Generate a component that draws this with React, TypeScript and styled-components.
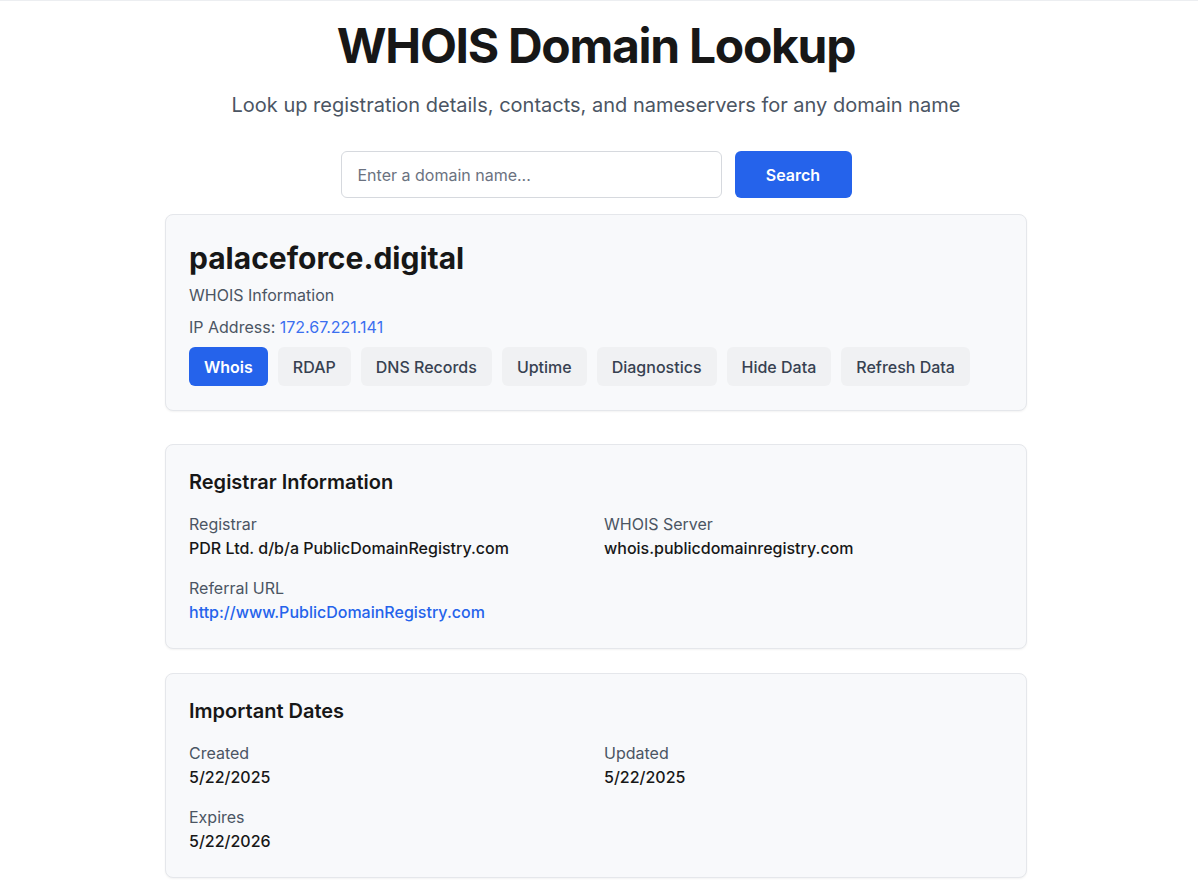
import React, { useState } from 'react'
import styled, { createGlobalStyle } from 'styled-components'

const GlobalStyle = createGlobalStyle`
  * {
    box-sizing: border-box;
  }

  body {
    margin: 0;
    padding-right: 6px;
    background: #ffffff;
    color: #111827;
    font-family: Inter, "Noto Sans", "Liberation Sans", sans-serif;
    border-top: 1px solid #eceef1;
  }
`

const Page = styled.div`
  max-width: 862px;
  margin: 0 auto;
  padding: 16px 0 24px;
`

const Header = styled.header`
  text-align: center;
`

const Title = styled.h1`
  margin: 0;
  font-size: 48px;
  line-height: 58px;
  font-weight: 700;
  letter-spacing: -1.3px;
  color: #171717;
`

const Subtitle = styled.p`
  margin: 16px 0 0;
  font-size: 20px;
  line-height: 28px;
  color: #4b5563;
`

const SearchForm = styled.form`
  display: flex;
  justify-content: center;
  gap: 13px;
  margin: 32px 0 16px;
`

const SearchInput = styled.input`
  width: 381px;
  height: 47px;
  padding: 0 16px;
  border: 1px solid #d6d9de;
  border-radius: 6px;
  font-family: inherit;
  font-size: 16px;
  color: #111827;
  outline: none;

  &::placeholder {
    color: #6b7280;
  }
`

const SearchButton = styled.button`
  width: 117px;
  height: 47px;
  border: none;
  border-radius: 6px;
  background: #2563eb;
  color: #ffffff;
  font-family: inherit;
  font-size: 16px;
  font-weight: 600;
  cursor: pointer;
`

const Card = styled.section<{ $spaceAfter: number }>`
  background: #f8f9fb;
  border: 1px solid #e5e7eb;
  border-radius: 8px;
  box-shadow: 0 1px 2px rgba(0, 0, 0, 0.05);
  padding: 23px 23px 24px;
  margin-bottom: ${(p) => p.$spaceAfter}px;
`

const DomainName = styled.h2`
  margin: 0;
  font-size: 30px;
  line-height: 40px;
  font-weight: 700;
  color: #171717;
`

const MetaLine = styled.p<{ $gap: number }>`
  margin: ${(p) => p.$gap}px 0 0;
  font-size: 16px;
  line-height: 24px;
  color: #4b5563;
`

const IpLink = styled.a`
  color: #3b6ff0;
  text-decoration: none;
`

const TabRow = styled.div`
  display: flex;
  flex-wrap: wrap;
  gap: 10px;
  margin-top: 8px;
`

const TabButton = styled.button<{ $active?: boolean }>`
  height: 39px;
  padding: 0 15px;
  border: none;
  border-radius: 6px;
  background: ${(p) => (p.$active ? '#2563eb' : '#f0f1f3')};
  color: ${(p) => (p.$active ? '#ffffff' : '#374151')};
  font-family: inherit;
  font-size: 16px;
  font-weight: ${(p) => (p.$active ? 600 : 500)};
  cursor: pointer;
`

const SectionTitle = styled.h3`
  margin: 0 0 16px;
  font-size: 20px;
  line-height: 28px;
  font-weight: 600;
  color: #171717;
`

const InfoGrid = styled.div`
  display: grid;
  grid-template-columns: 1fr 1fr;
  column-gap: 16px;
  row-gap: 16px;
`

const Field = styled.div`
  display: flex;
  flex-direction: column;
`

const FieldLabel = styled.span`
  font-size: 16px;
  line-height: 24px;
  color: #4b5563;
`

const FieldValue = styled.span`
  font-size: 16px;
  line-height: 24px;
  font-weight: 500;
  color: #171717;
`

const FieldLink = styled.a`
  font-size: 16px;
  line-height: 24px;
  font-weight: 500;
  color: #2563eb;
  text-decoration: none;
`

const tabs = ['Whois', 'RDAP', 'DNS Records', 'Uptime', 'Diagnostics', 'Hide Data', 'Refresh Data']

export default function App() {
  const [domain, setDomain] = useState('')
  const [activeTab, setActiveTab] = useState('Whois')

  return (
    <>
      <GlobalStyle />
      <Page>
        <Header>
          <Title>WHOIS Domain Lookup</Title>
          <Subtitle>Look up registration details, contacts, and nameservers for any domain name</Subtitle>
        </Header>

        <SearchForm onSubmit={(e) => e.preventDefault()}>
          <SearchInput
            placeholder="Enter a domain name..."
            value={domain}
            onChange={(e) => setDomain(e.target.value)}
          />
          <SearchButton type="submit">Search</SearchButton>
        </SearchForm>

        <Card $spaceAfter={33}>
          <DomainName>palaceforce.digital</DomainName>
          <MetaLine $gap={5}>WHOIS Information</MetaLine>
          <MetaLine $gap={8}>
            IP Address: <IpLink href="#">172.67.221.141</IpLink>
          </MetaLine>
          <TabRow>
            {tabs.map((tab) => (
              <TabButton key={tab} $active={tab === activeTab} onClick={() => setActiveTab(tab)}>
                {tab}
              </TabButton>
            ))}
          </TabRow>
        </Card>

        <Card $spaceAfter={24}>
          <SectionTitle>Registrar Information</SectionTitle>
          <InfoGrid>
            <Field>
              <FieldLabel>Registrar</FieldLabel>
              <FieldValue>PDR Ltd. d/b/a PublicDomainRegistry.com</FieldValue>
            </Field>
            <Field>
              <FieldLabel>WHOIS Server</FieldLabel>
              <FieldValue>whois.publicdomainregistry.com</FieldValue>
            </Field>
            <Field>
              <FieldLabel>Referral URL</FieldLabel>
              <FieldLink href="#">http://www.PublicDomainRegistry.com</FieldLink>
            </Field>
          </InfoGrid>
        </Card>

        <Card $spaceAfter={0}>
          <SectionTitle>Important Dates</SectionTitle>
          <InfoGrid>
            <Field>
              <FieldLabel>Created</FieldLabel>
              <FieldValue>5/22/2025</FieldValue>
            </Field>
            <Field>
              <FieldLabel>Updated</FieldLabel>
              <FieldValue>5/22/2025</FieldValue>
            </Field>
            <Field>
              <FieldLabel>Expires</FieldLabel>
              <FieldValue>5/22/2026</FieldValue>
            </Field>
          </InfoGrid>
        </Card>
      </Page>
    </>
  )
}
